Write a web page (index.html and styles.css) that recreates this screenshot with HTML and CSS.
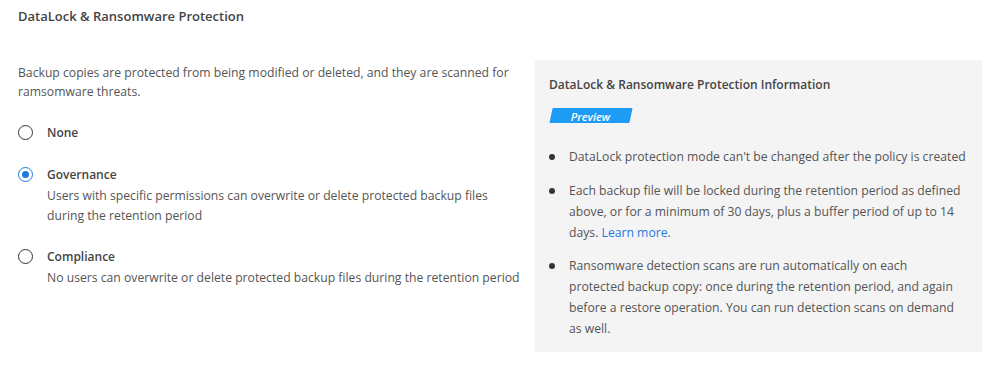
FILE: index.html
```html
<!DOCTYPE html>
<html lang="en">
<head>
<meta charset="utf-8">
<link rel="stylesheet" href="styles.css">
</head>
<body>
<div class="page">
  <h2 class="title">DataLock &amp; Ransomware Protection</h2>
  <div class="columns">
    <div class="left">
      <p class="intro">Backup copies are protected from being modified or deleted, and they are scanned for ramsomware threats.</p>
      <div class="options">
        <div class="option">
          <span class="radio"></span>
          <div class="opt-body">
            <div class="opt-label">None</div>
          </div>
        </div>
        <div class="option">
          <span class="radio checked"></span>
          <div class="opt-body">
            <div class="opt-label">Governance</div>
            <div class="opt-desc">Users with specific permissions can overwrite or delete protected backup files during the retention period</div>
          </div>
        </div>
        <div class="option">
          <span class="radio"></span>
          <div class="opt-body">
            <div class="opt-label">Compliance</div>
            <div class="opt-desc">No users can overwrite or delete protected backup files during the retention period</div>
          </div>
        </div>
      </div>
    </div>
    <aside class="info">
      <h3 class="info-title">DataLock &amp; Ransomware Protection Information</h3>
      <span class="badge"><span class="badge-text">Preview</span></span>
      <ul class="bullets">
        <li class="single">DataLock protection mode can't be changed after the policy is created</li>
        <li>Each backup file will be locked during the retention period as defined above, or for a minimum of 30 days, plus a buffer period of up to 14 days. <a href="#" class="link">Learn more.</a></li>
        <li>Ransomware detection scans are run automatically on each protected backup copy: once during the retention period, and again before a restore operation. You can run detection scans on demand as well.</li>
      </ul>
    </aside>
  </div>
</div>
</body>
</html>
```

FILE: styles.css
```css
* { box-sizing: border-box; }
html, body { margin: 0; padding: 0; background: #fff; }
body {
  font-family: "Open Sans", "Noto Sans", sans-serif;
  font-size: 12.2px;
  color: #555;
}
.page {
  padding: 6px 16px 0 18px;
}
.title {
  margin: 0;
  font-size: 13px;
  font-weight: 600;
  color: #444;
  line-height: 20px;
}
.columns {
  display: flex;
  align-items: flex-start;
  justify-content: space-between;
  margin-top: 34px;
}
.left {
  width: 505px;
  padding-top: 3px;
}
.intro {
  margin: 0;
  line-height: 19px;
}
.options {
  display: flex;
  flex-direction: column;
  gap: 21.5px;
  margin-top: 22px;
}
.option {
  display: flex;
  align-items: flex-start;
  gap: 14px;
}
.radio {
  flex: none;
  width: 15px;
  height: 15px;
  border: 1.6px solid #333;
  border-radius: 50%;
  margin-top: 2px;
  position: relative;
}
.radio.checked {
  border-color: #1f7ae0;
}
.radio.checked::after {
  content: "";
  position: absolute;
  left: 50%;
  top: 50%;
  width: 7px;
  height: 7px;
  margin: -3.5px 0 0 -3.5px;
  border-radius: 50%;
  background: #1f7ae0;
}
.opt-label {
  font-size: 12px;
  font-weight: 600;
  color: #444;
  line-height: 20px;
}
.opt-desc {
  line-height: 20px;
  margin-top: 1px;
}
.info {
  width: 447px;
  flex: none;
  background: #f4f4f4;
  padding: 15px 20px 13px 14px;
}
.info-title {
  margin: 0;
  font-size: 12px;
  font-weight: 600;
  color: #444;
  line-height: 20px;
}
.badge {
  display: inline-block;
  margin-top: 13px;
  margin-left: 2px;
  width: 80px;
  height: 15px;
  background: #1e9bf5;
  transform: skewX(-12deg);
  border-radius: 1px;
  text-align: center;
}
.badge-text {
  display: inline-block;
  transform: skewX(12deg);
  color: #fff;
  font-size: 11px;
  font-weight: 600;
  font-style: italic;
  line-height: 15px;
}
.bullets {
  list-style: none;
  margin: 21px 0 0 0;
  padding: 0;
  display: flex;
  flex-direction: column;
  gap: 12.5px;
}
.bullets li {
  position: relative;
  padding-left: 20px;
  line-height: 21px;
}
.bullets li.single {
  white-space: nowrap;
}
.bullets li::before {
  content: "";
  position: absolute;
  left: 0;
  top: 8px;
  width: 6px;
  height: 6px;
  border-radius: 50%;
  background: #333;
}
.link {
  color: #1f7ae0;
  text-decoration: none;
}
```
